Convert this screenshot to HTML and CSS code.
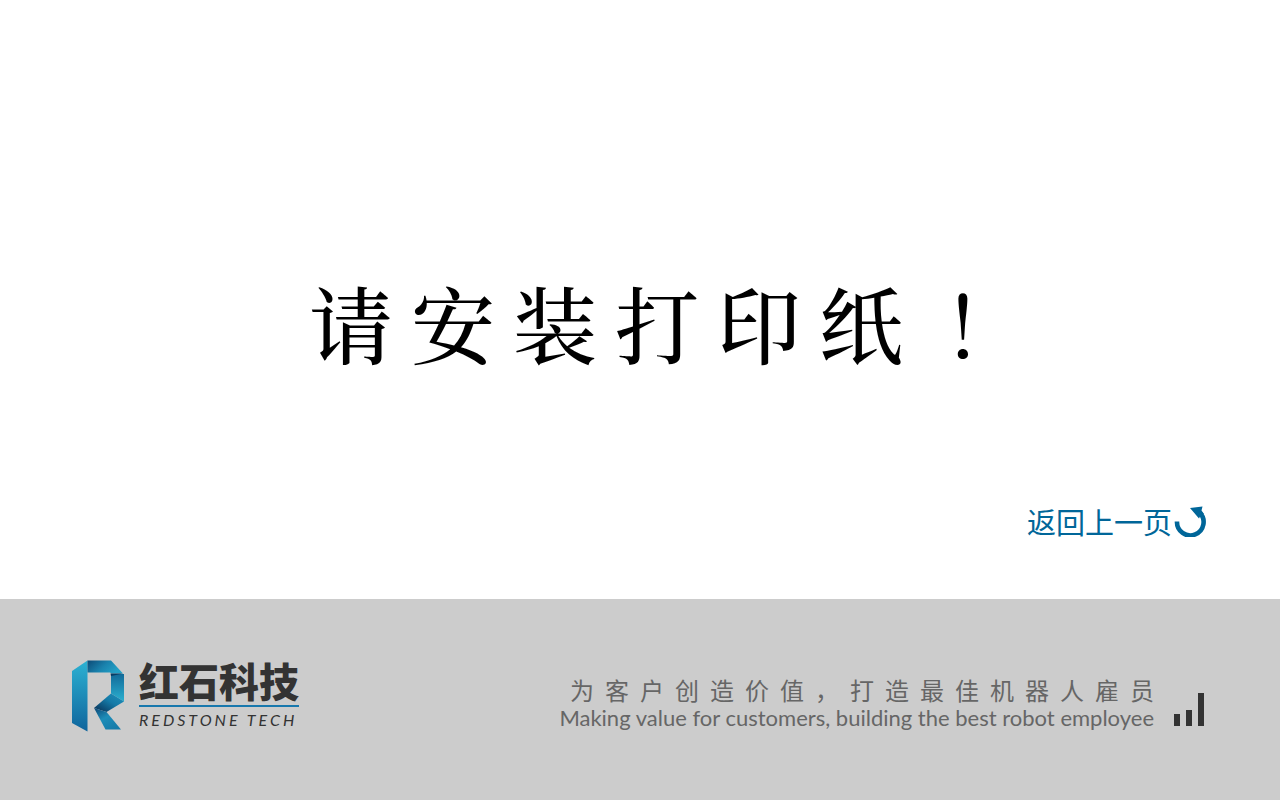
FILE: index.html
```html
<!DOCTYPE html>
<html lang="zh-CN">
<head>
<meta charset="utf-8">
<title>请安装打印纸！</title>
<meta name="viewport" content="width=device-width, initial-scale=1">
<link rel="stylesheet" href="styles.css">
</head>
<body>
<main class="notice">
  <h1 class="message">请安装打印纸<span lang="zh-TW">！</span></h1>
  <a class="back" href="#">
    <span>返回上一页</span>
    <svg class="back-icon" viewBox="0 0 32 32" aria-hidden="true">
      <path d="M3 16.500A13.300 13.300 0 1 0 25.500 7.500" fill="none" stroke="#006699" stroke-width="4.600"/>
      <path d="M16 3 28.500 1.500 27.500 5.500 30 9 27 9.500 25 13.500Z" fill="#006699"/>
    </svg>
  </a>
</main>
<footer class="footer">
  <div class="brand">
    <svg class="brand-mark" viewBox="0 0 53 72" aria-hidden="true">
      <defs>
        <linearGradient id="stem" x1="0" y1="0" x2="0" y2="1"><stop offset="0" stop-color="#2cb2d3"/><stop offset="1" stop-color="#0f649c"/></linearGradient>
        <linearGradient id="top" x1="0" y1="0" x2="1" y2="0.400"><stop offset="0" stop-color="#0c4a77"/><stop offset="0.550" stop-color="#1a83ae"/><stop offset="1" stop-color="#24a2c7"/></linearGradient>
        <linearGradient id="side" x1="0" y1="0" x2="0" y2="1"><stop offset="0" stop-color="#126a99"/><stop offset="1" stop-color="#2bb0d0"/></linearGradient>
        <linearGradient id="fold" x1="1" y1="0" x2="0" y2="1"><stop offset="0" stop-color="#1f92bc"/><stop offset="0.450" stop-color="#157aa7"/><stop offset="1" stop-color="#072b50"/></linearGradient>
        <linearGradient id="leg" x1="0" y1="0" x2="0.700" y2="1"><stop offset="0" stop-color="#0d4776"/><stop offset="0.500" stop-color="#1d8db8"/><stop offset="1" stop-color="#167ba9"/></linearGradient>
      </defs>
      <path d="M0 11 15.500 0.500V71.500L0 63Z" fill="url(#stem)"/>
      <path d="M15.500 0.500H39L51 13.500H39.500L38 12.500H15.500Z" fill="url(#top)"/>
      <path d="M39 14H52V41.500L39 33.500Z" fill="url(#side)"/>
      <path d="M39 33.500 52 41.500 34.500 52 22 48Z" fill="url(#fold)"/>
      <path d="M22 48 34.500 52 49 69.500H33.500Z" fill="url(#leg)"/>
      <path d="M38.500 13.500H51L39 16Z" fill="#0a3c64"/>
    </svg>
    <div class="brand-text">
      <strong class="brand-cn">红石科技</strong>
      <span class="brand-en">REDSTONE TECH</span>
    </div>
  </div>
  <div class="closing">
    <div class="slogan">
      <p class="slogan-cn">为客户创造价值，打造最佳机器人雇员</p>
      <p class="slogan-en">Making value for customers, building the best robot employee</p>
    </div>
    <svg class="signal" viewBox="0 0 30 33" aria-hidden="true">
      <path d="M0 21H6V33H0ZM12 17H18V33H12ZM24 0H30V33H24Z" fill="#333"/>
    </svg>
  </div>
</footer>
</body>
</html>
```
FILE: styles.css
```css
* {
  box-sizing: border-box;
}

body {
  display: flex;
  flex-direction: column;
  min-height: 100vh;
  margin: 0;
  background: #fff;
  font-family: "Noto Sans CJK SC", sans-serif;
}

.notice {
  display: flex;
  flex: 1;
  flex-direction: column;
  align-items: center;
  justify-content: flex-end;
  padding: 0 74px 58px;
}

.message {
  margin: 0;
  padding-left: 52px;
  color: #000;
  font-family: "Noto Serif CJK SC", "Noto Serif SC", SimSun, "Noto Sans CJK SC", serif;
  font-size: 84px;
  font-weight: 500;
  line-height: 100px;
  letter-spacing: 18px;
}

.message span {
  font-family: "Noto Serif CJK TC", "Noto Serif CJK SC", serif;
}

.back {
  display: flex;
  align-items: center;
  align-self: flex-end;
  gap: 2px;
  margin-top: 129px;
  color: #069;
  font-size: 29px;
  font-weight: 400;
  line-height: 40px;
  text-decoration: none;
}

.back-icon {
  width: 32px;
  height: 32px;
}

.footer {
  display: flex;
  align-items: center;
  justify-content: space-between;
  min-height: 201px;
  padding: 0 76px 6px 72px;
  background: #ccc;
}

.brand,
.closing {
  display: flex;
}

.brand {
  gap: 14px;
}

.brand-mark {
  width: 53px;
  height: 72px;
}

.brand-text {
  display: flex;
  flex-direction: column;
  color: #333;
}

.brand-cn {
  padding-bottom: 5px;
  border-bottom: 2px solid #1878ad;
  font-size: 40px;
  font-weight: 900;
  line-height: 40px;
}

.brand-en {
  font-family: Lato, sans-serif;
  font-size: 16px;
  font-style: italic;
  line-height: 26px;
  letter-spacing: 3px;
}

.closing {
  align-items: flex-end;
  gap: 20px;
  padding-top: 14px;
  color: #666;
}

.slogan p {
  margin: 0;
  text-align: right;
  white-space: nowrap;
}

.slogan .slogan-cn {
  margin-right: -11px;
  font-size: 24px;
  line-height: 28px;
  letter-spacing: 11px;
}

.slogan-en {
  font-family: Lato, sans-serif;
  font-size: 22px;
  line-height: 28px;
}

.signal {
  width: 30px;
  height: 33px;
  margin-bottom: 6px;
}
```
